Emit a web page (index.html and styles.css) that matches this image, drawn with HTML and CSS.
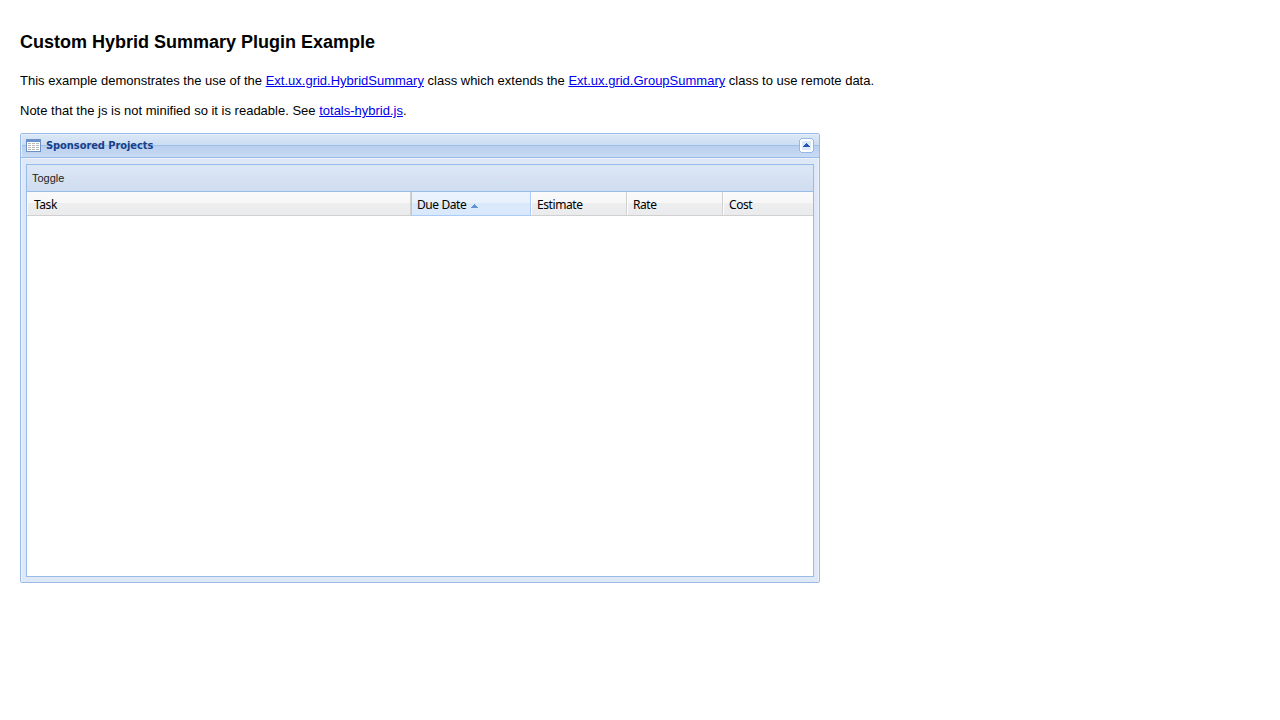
FILE: index.html
```
<!DOCTYPE html>
<html lang="en">
<head>
<meta charset="utf-8">
<title>Custom Hybrid Summary Plugin Example</title>
<link rel="stylesheet" href="styles.css">
</head>
<body>
<h1 class="page-title">Custom Hybrid Summary Plugin Example</h1>
<p class="intro">This example demonstrates the use of the <a href="#">Ext.ux.grid.HybridSummary</a> class which extends the <a href="#">Ext.ux.grid.GroupSummary</a> class to use remote data.</p>
<p class="intro">Note that the js is not minified so it is readable. See <a href="#">totals-hybrid.js</a>.</p>
<section class="panel">
  <header class="panel-header">
    <svg class="panel-icon" width="16" height="14" viewBox="0 0 16 14" shape-rendering="crispEdges">
      <rect x="0.5" y="0.5" width="14" height="12" fill="#fff" stroke="#6d91c4"/>
      <path d="M1 1h13v2H1z" fill="#6793d2"/>
      <path d="M2 4h3v1H2zM6 4h3v1H6zM10 4h3v1h-3zM2 6h3v1H2zM6 6h3v1H6zM10 6h3v1h-3zM2 8h3v1H2zM6 8h3v1H6zM10 8h3v1h-3zM2 10h3v1H2zM6 10h3v1H6zM10 10h3v1h-3z" fill="#b9babd"/>
    </svg>
    <span class="panel-title">Sponsored Projects</span>
    <svg class="collapse" width="15" height="15" viewBox="0 0 15 15" shape-rendering="crispEdges">
      <path d="M2 0h11v1h1v1h1v11h-1v1h-1v1H2v-1H1v-1H0V2h1V1h1z" fill="#94b9e9"/>
      <path d="M2 1h11v1h1v11h-1v1H2v-1H1V2h1z" fill="#fff"/>
      <path d="M3 3h9v9H3z" fill="#dcebfb"/>
      <path d="M7 5h1v1h1v1h1v1h1v1H4V8h1V7h1V6h1z" fill="#2c54b4"/>
    </svg>
  </header>
  <div class="panel-body">
    <div class="grid">
      <div class="toolbar">Toggle</div>
      <div class="columns">
        <div class="column column-task"><span>Task</span></div>
        <div class="column column-due"><span>Due Date</span>
          <svg width="7" height="4" viewBox="0 0 7 4" shape-rendering="crispEdges"><path d="M3 0h1v1h1v1h1v1h1v1H0V3h1V2h1V1h1z" fill="#6593cf"/></svg>
        </div>
        <div class="column column-number"><span>Estimate</span></div>
        <div class="column column-number"><span>Rate</span></div>
        <div class="column column-last"><span>Cost</span></div>
      </div>
      <div class="rows"></div>
    </div>
  </div>
</section>
</body>
</html>
```
FILE: styles.css
```
* { box-sizing: border-box; }
body {
  margin: 0;
  padding: 32px 20px 20px;
  background: #fff;
  color: #000;
  font: 13px/15px "Liberation Sans", Arial, sans-serif;
}
.page-title { margin: 0 0 21px; font-size: 18px; line-height: 20px; }
.intro { margin: 0 0 15px; }
.intro a { color: #00e; }
.panel {
  width: 800px;
  height: 450px;
  border: 1px solid #99bbe8;
  border-radius: 2px;
  background: #dfe8f6;
  display: flex;
  flex-direction: column;
}
.panel-header {
  height: 24px;
  flex: none;
  display: flex;
  align-items: flex-start;
  padding: 5px 5px 0;
  border-bottom: 1px solid #99bbe8;
  background: linear-gradient(#dce8f6, #cbddf3 11px, #9fc0ea 11px, #9fc0ea 12px, #b8cfee 12px, #c9dbf4);
  box-shadow: inset 1px 1px 0 #e5eefa;
}
.panel-icon { flex: none; }
.panel-title {
  flex: 1;
  margin-left: 4px;
  color: #15428b;
  font: bold 11px/13px "DejaVu Sans Condensed", "DejaVu Sans", sans-serif;
  letter-spacing: -0.06px;
}
.collapse { flex: none; margin-top: -1px; }
.panel-body {
  flex: 1;
  padding: 6px 5px 5px;
  box-shadow: inset 1px 1px 0 #edf3fb, inset -1px 0 0 #edf3fb;
}
.grid {
  height: 413px;
  border: 1px solid #99bbe8;
  background: #fff;
  display: flex;
  flex-direction: column;
}
.toolbar {
  height: 27px;
  padding: 6px 5px;
  border-bottom: 1px solid #99bbe8;
  background: linear-gradient(#dce7f6, #cfddef);
  color: #222;
  font-size: 11px;
  line-height: 14px;
}
.columns {
  height: 24px;
  display: flex;
  border-bottom: 1px solid #d0d0d0;
  background: linear-gradient(#fafafa, #f7f7f7 11px, #eeeeef 11px, #eaebed);
  font: 12px/16px "Noto Sans", sans-serif;
  letter-spacing: -0.42px;
}
.column {
  height: 24px;
  padding: 5px 6px 3px;
  border-right: 1px solid #d0d0d0;
  border-bottom: 1px solid #d0d0d0;
  box-shadow: inset 1px 0 0 #fff;
}
.column-task { width: 384px; padding-left: 7px; }
.column-due {
  width: 120px;
  display: flex;
  gap: 4px;
  border: solid #aaccf6;
  border-width: 0 1px 1px;
  padding-left: 5px;
  background: linear-gradient(#ebf3fd, #e7f1fc 11px, #dae9fa 11px, #d9e8fb);
  box-shadow: none;
}
.column-due span { width: 50px; white-space: nowrap; }
.column-due svg { margin-top: 7px; }
.column-number { width: 96px; }
.column-last { flex: 1; border-right: 0; }
.rows { flex: 1; }
```
